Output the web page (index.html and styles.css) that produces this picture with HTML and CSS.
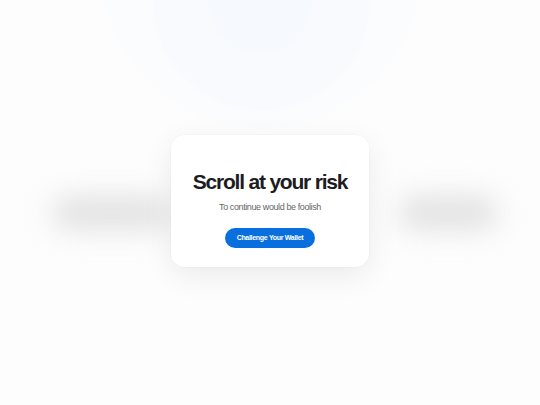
FILE: index.html
```html
<!DOCTYPE html>
<html lang="en">
<head>
<meta charset="utf-8">
<title>Scroll at your risk</title>
<link rel="stylesheet" href="styles.css">
</head>
<body>
<div class="backdrop">
  <div class="ring ring-outer"></div>
  <div class="ring ring-mid"></div>
  <div class="ring ring-inner"></div>
  <div class="ghost ghost-left"></div>
  <div class="ghost ghost-right"></div>
</div>
<main class="overlay">
  <section class="card">
    <h1 class="title">Scroll at your risk</h1>
    <p class="subtitle">To continue would be foolish</p>
    <button class="cta" type="button">Challenge Your Wallet</button>
  </section>
</main>
</body>
</html>
```
FILE: styles.css
```css
* { box-sizing: border-box; }
html, body { margin: 0; padding: 0; }
body {
  width: 540px;
  height: 405px;
  overflow: hidden;
  background: #fdfdfd;
  font-family: "Liberation Sans", Arial, sans-serif;
  position: relative;
}
.backdrop {
  position: absolute;
  inset: 0;
  overflow: hidden;
}
.ring {
  position: absolute;
  border-radius: 50%;
  filter: blur(1px);
}
.ring-outer {
  left: 100px; top: -196px; width: 322px; height: 324px;
  background: #fbfcfe;
}
.ring-mid {
  left: 153px; top: -108px; width: 217px; height: 218px;
  background: #f8fafd;
}
.ring-inner {
  left: 210px; top: -48px; width: 100px; height: 100px;
  background: #f6f9fd;
}
.ghost {
  position: absolute;
  background: #d6d6d6;
  border-radius: 20px;
  filter: blur(14px);
  opacity: 0.7;
}
.ghost-left { left: 52px; top: 196px; width: 120px; height: 34px; }
.ghost-right { left: 398px; top: 196px; width: 100px; height: 34px; }
.overlay {
  position: absolute;
  inset: 0;
  display: flex;
  align-items: center;
  justify-content: center;
  padding-bottom: 1px;
}
.card {
  width: 198px;
  height: 132px;
  margin-top: -3px;
  background: #ffffff;
  border-radius: 14px;
  box-shadow: 0 8px 30px rgba(0,0,0,0.08), 0 0 0 1px rgba(0,0,0,0.015);
  display: flex;
  flex-direction: column;
  align-items: center;
  padding-top: 35px;
}
.title {
  margin: 0;
  font-size: 21px;
  font-weight: 700;
  color: #1d1d1f;
  letter-spacing: -1.2px;
  line-height: 24px;
}
.subtitle {
  margin: 7px 0 0;
  font-size: 9px;
  color: #666668;
  letter-spacing: -0.4px;
  line-height: 12px;
}
.cta {
  margin-top: 15px;
  width: 90px;
  height: 20px;
  border: none;
  border-radius: 10px;
  background: #0a6fde;
  color: #ffffff;
  font-family: "Liberation Sans", Arial, sans-serif;
  font-size: 7px;
  font-weight: 700;
  letter-spacing: -0.3px;
  padding: 0;
  display: flex;
  align-items: center;
  justify-content: center;
}
```
